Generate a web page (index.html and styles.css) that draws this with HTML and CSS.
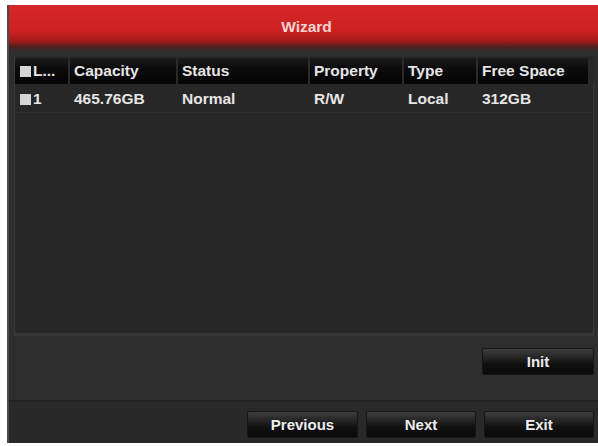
FILE: index.html
```html
<!DOCTYPE html>
<html>
<head>
<meta charset="utf-8">
<link rel="stylesheet" href="styles.css">
</head>
<body>
<div class="dialog">
  <div class="title-bar">Wizard</div>
  <div class="main">
    <div class="table-panel">
      <div class="row head">
        <div class="cell first"><span class="check"></span>L...</div>
        <div class="cell">Capacity</div>
        <div class="cell">Status</div>
        <div class="cell">Property</div>
        <div class="cell">Type</div>
        <div class="cell">Free Space</div>
        <div class="cell filler"></div>
      </div>
      <div class="row data">
        <div class="cell first"><span class="check"></span>1</div>
        <div class="cell">465.76GB</div>
        <div class="cell">Normal</div>
        <div class="cell">R/W</div>
        <div class="cell">Local</div>
        <div class="cell">312GB</div>
        <div class="cell filler"></div>
      </div>
    </div>
    <div class="action-row">
      <button class="btn init">Init</button>
    </div>
  </div>
  <div class="footer">
    <button class="btn prev">Previous</button>
    <button class="btn next">Next</button>
    <button class="btn exit">Exit</button>
  </div>
</div>
</body>
</html>
```
FILE: styles.css
```css
html, body {
  margin: 0;
  padding: 0;
  background: #ffffff;
}
body {
  width: 598px;
  height: 446px;
  overflow: hidden;
  font-family: "Liberation Sans", Arial, sans-serif;
}
.dialog {
  margin: 5px 0 0 7px;
  width: 591px;
  height: 438px;
  background: #2c2c2c;
  display: flex;
  flex-direction: column;
  border-left: 2px solid #4a4a4a;
  box-sizing: border-box;
}
.title-bar {
  height: 47px;
  flex: none;
  background: linear-gradient(to bottom, #d52727 0%, #cd2121 55%, #a31a1a 76%, #4a2020 90%, #2b3131 100%);
  color: #f3d3d3;
  font-weight: bold;
  font-size: 15.5px;
  text-align: center;
  line-height: 44px;
  padding-left: 6px;
}
.main {
  flex: none;
  height: 348px;
  display: flex;
  flex-direction: column;
  padding: 4px 4px 0 5px;
  box-sizing: border-box;
  background: #2d2d2d;
}
.table-panel {
  height: 278px;
  flex: none;
  border: 1px solid #3a3a3a;
  border-top-color: #2a2a2a;
  background: #272727;
  box-sizing: border-box;
  padding-top: 1px;
}
.row {
  display: grid;
  grid-template-columns: 53px 106px 130px 92px 72px 110px 1fr;
  column-gap: 2px;
  color: #e6e6e6;
  font-weight: bold;
  font-size: 15.5px;
}
.row.head {
  height: 26px;
  background: #2a2a2a;
}
.row.head .cell {
  background: linear-gradient(to bottom, #1c1c1c 0%, #0b0b0b 40%, #050505 100%);
}
.row.head .cell.filler {
  background: #2a2a2a;
}
.row.data {
  height: 26px;
  margin-top: 2px;
  border-bottom: 1px solid #2f2f2f;
}
.cell {
  display: flex;
  align-items: center;
  padding-left: 4px;
  white-space: nowrap;
  overflow: hidden;
}
.cell.first {
  padding-left: 5px;
}
.check {
  width: 11px;
  height: 11px;
  background: #d6d6d6;
  margin-right: 2px;
  flex: none;
}
.action-row {
  flex: 1;
  display: flex;
  justify-content: flex-end;
  align-items: flex-start;
  padding-top: 12px;
  border-top: 2px solid #383838;
}
.btn {
  font-family: "Liberation Sans", Arial, sans-serif;
  font-weight: bold;
  font-size: 15px;
  color: #ededed;
  height: 27px;
  border: 1px solid #161616;
  border-radius: 2px;
  background: linear-gradient(to bottom, #3e3e3e 0%, #242424 35%, #101010 60%, #0a0a0a 100%);
  padding: 0;
  cursor: pointer;
}
.btn.init {
  width: 112px;
  margin-right: 0;
}
.footer {
  flex: 1;
  display: flex;
  justify-content: flex-end;
  align-items: flex-start;
  gap: 8px;
  padding: 10px 4px 0 0;
  background: #292929;
  border-top: 1px solid #202020;
  box-shadow: inset 0 1px 0 #242424;
}
.btn.prev { width: 111px; }
.btn.next { width: 110px; }
.btn.exit { width: 110px; }
```
